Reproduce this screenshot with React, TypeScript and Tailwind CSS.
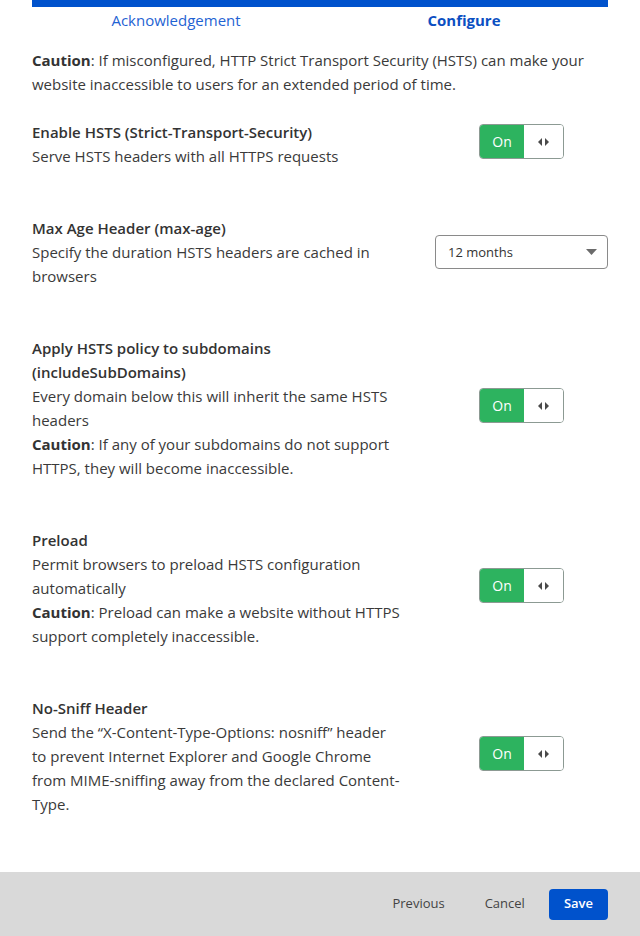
import type { ReactNode } from "react";

const FONT = { fontFamily: '"Open Sans", "Noto Sans", sans-serif' };

function Toggle() {
  return (
    <div className="flex h-[35px] w-[85px] overflow-hidden rounded-[4px] border border-[#8c9a93]">
      <div className="flex w-[44px] items-center justify-center bg-[#2db35f] text-[14px] text-white">
        On
      </div>
      <div className="flex flex-1 items-center justify-center bg-white">
        <svg width="11" height="8" viewBox="0 0 11 8">
          <path d="M4 0 L0 4 L4 8 Z" fill="#4a4a4a" />
          <path d="M7 0 L11 4 L7 8 Z" fill="#4a4a4a" />
        </svg>
      </div>
    </div>
  );
}

function Select() {
  return (
    <div className="mt-[5px] flex h-[34px] w-[173px] items-center justify-between rounded-[4px] border border-[#8a8a8a] bg-white pl-3 pr-[10px] text-[13px] text-[#333]">
      <span className="pt-[2px]">12 months</span>
      <svg width="11" height="6" viewBox="0 0 11 6">
        <path d="M0 0 L11 0 L5.5 6 Z" fill="#6b6b6b" />
      </svg>
    </div>
  );
}

function Row({ title, children, control }: { title: ReactNode; children: ReactNode; control: ReactNode }) {
  return (
    <div className="flex items-center">
      <div className="w-[392px] text-[15px] leading-6 text-[#3a3a3a]">
        <div className="font-semibold text-[#333]">{title}</div>
        {children}
      </div>
      <div className="mb-[5px] ml-auto flex w-[173px] justify-center">{control}</div>
    </div>
  );
}

export default function App() {
  return (
    <div className="flex min-h-[936px] flex-col bg-white" style={FONT}>
      <div className="px-8">
        <div className="h-[7px] bg-[#0052cc]" />
        <div className="grid grid-cols-2 text-[15px] leading-6">
          <div className="pt-[1px] text-center text-[#1f63d3]">Acknowledgement</div>
          <div className="pt-[1px] text-center font-bold text-[#0b4fc2]">Configure</div>
        </div>
        <p className="mt-4 text-[15px] leading-6 text-[#3a3a3a]">
          <b className="font-bold text-[#333]">Caution</b>: If misconfigured, HTTP Strict Transport Security (HSTS) can make your
          website inaccessible to users for an extended period of time.
        </p>
        <div className="mt-6 flex flex-col gap-12">
          <Row title="Enable HSTS (Strict-Transport-Security)" control={<Toggle />}>
            <div>Serve HSTS headers with all HTTPS requests</div>
          </Row>
          <Row title="Max Age Header (max-age)" control={<Select />}>
            <div>Specify the duration HSTS headers are cached in browsers</div>
          </Row>
          <Row
            title={
              <>
                Apply HSTS policy to subdomains
                <br />
                (includeSubDomains)
              </>
            }
            control={<Toggle />}
          >
            <div>Every domain below this will inherit the same HSTS headers</div>
            <div>
              <b className="font-bold text-[#333]">Caution</b>: If any of your subdomains do not support HTTPS, they
              will become inaccessible.
            </div>
          </Row>
          <Row title="Preload" control={<Toggle />}>
            <div>Permit browsers to preload HSTS configuration automatically</div>
            <div>
              <b className="font-bold text-[#333]">Caution</b>: Preload can make a website without HTTPS support
              completely inaccessible.
            </div>
          </Row>
          <Row title="No-Sniff Header" control={<Toggle />}>
            <div>
              Send the “X-Content-Type-Options: nosniff” header
              <br />
              to prevent Internet Explorer and Google Chrome
              <br />
              from MIME-sniffing away from the declared Content-
              <br />
              Type.
            </div>
          </Row>
        </div>
      </div>
      <div className="mt-auto flex h-16 items-center justify-end bg-[#d9d9d9] pr-8 text-[13px]">
        <button className="px-5 py-1.5 text-[#444]">Previous</button>
        <button className="px-5 py-1.5 text-[#444]">Cancel</button>
        <button className="ml-1 h-[31px] rounded-[4px] bg-[#0052cc] px-[15px] font-semibold text-white">Save</button>
      </div>
    </div>
  );
}
